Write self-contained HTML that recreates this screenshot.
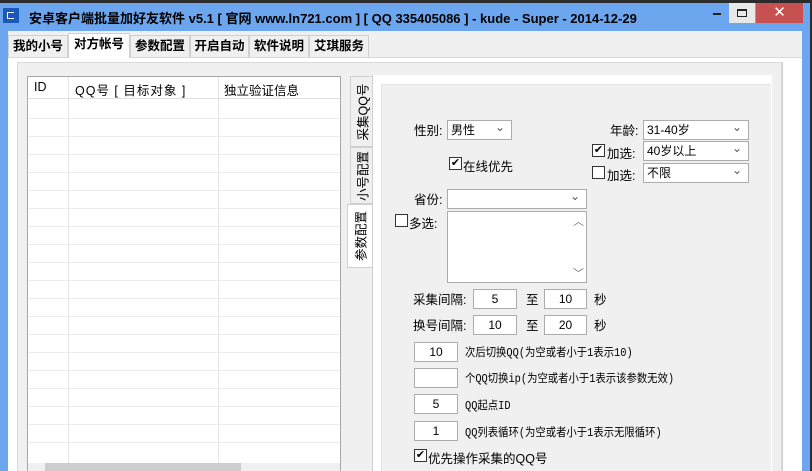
<!DOCTYPE html>
<html><head><meta charset="utf-8"><style>
*{margin:0;padding:0;box-sizing:border-box}
body{width:812px;height:471px;overflow:hidden;background:#6ca6ee;font-family:"Liberation Sans","Noto Sans CJK SC","WenQuanYi Zen Hei",sans-serif;font-size:12px;color:#000;position:relative}
.a{position:absolute}
.tb{left:0;top:0;width:812px;height:3px;background:#2b2b2b}
.tab{position:absolute;top:35px;height:22px;border:1px solid #d0d0d0;border-bottom:none;background:#f0f0f0;font-size:12.5px;line-height:20px;text-align:center;font-weight:bold}
.inp{position:absolute;background:#fff;border:1px solid #acacac;text-align:center;font-size:12px;line-height:18px;height:20px}
.cb{position:absolute;width:13px;height:13px;border:1px solid #333;background:#fff;font-size:11px;line-height:11px;text-align:center}
.lbl{position:absolute;font-size:12.5px;white-space:nowrap;margin-top:-2px}
.sm{font-family:"Liberation Mono","WenQuanYi Zen Hei",monospace;font-size:11.5px;transform:scaleX(.9);transform-origin:left}
.combo{position:absolute;background:#fff;border:1px solid #acacac;height:20px;line-height:18px;padding-left:3px}
.combo:after{content:"⌄";position:absolute;right:6px;top:-3px;color:#555;font-size:12px}
.vt{position:absolute;border:1px solid #d0d0d0;background:#f0f0f0;overflow:hidden}
.vt span{position:absolute;left:50%;top:50%;white-space:nowrap;font-size:12.5px;transform:translate(-50%,-50%) rotate(-90deg)}
.row{position:absolute;left:28px;width:312px;height:1px;background:#ececec}
</style></head><body>
<div class="a tb"></div>
<div class="a" style="left:3px;top:8px;width:16px;height:15px;background:#1c58b8"></div>
<div class="a" style="left:7px;top:12px;width:7px;height:7px;border:1.5px solid #fff;border-right:none"></div>
<div class="a" style="left:29px;top:8px;font-size:13px;font-weight:bold;white-space:nowrap">安卓客户端批量加好友软件 v5.1 [ 官网 www.ln721.com ] [ QQ 335405086 ] - kude - Super - 2014-12-29</div>
<div class="a" style="left:713px;top:13px;width:8px;height:2px;background:#222"></div>
<div class="a" style="left:729px;top:3px;width:26px;height:20px;background:#e8e8e8"></div>
<div class="a" style="left:737px;top:9px;width:10px;height:8px;border:1px solid #222;border-top-width:2px"></div>
<div class="a" style="left:756px;top:3px;width:47px;height:20px;background:#c75050;color:#fff;font-size:15px;line-height:20px;text-align:center">✕</div>
<div class="a" style="left:8px;top:31px;width:794px;height:440px;background:#f0f0f0"></div>
<div class="tab" style="left:8px;width:60px">我的小号</div>
<div class="tab" style="left:68px;width:62px;top:33px;height:25px;background:#fff;z-index:2">对方帐号</div>
<div class="tab" style="left:130px;width:60px">参数配置</div>
<div class="tab" style="left:190px;width:59px">开启自动</div>
<div class="tab" style="left:249px;width:60px">软件说明</div>
<div class="tab" style="left:309px;width:60px">艾琪服务</div>
<div class="a" style="left:8px;top:57px;width:794px;height:414px;background:#fff;border-top:1px solid #d9d9d9"></div>
<div class="a" style="left:17px;top:62px;width:765px;height:409px;background:#f0f0f0;border:1px solid #dadada;border-bottom:none"></div>
<!-- list -->
<div class="a" style="left:27px;top:76px;width:314px;height:395px;background:#fff;border:1px solid #a8a8a8;border-bottom:none"></div>
<div class="a" style="left:34px;top:80px;font-size:12.5px">ID</div>
<div class="a" style="left:75px;top:80px;font-size:12.5px;letter-spacing:1px">QQ号 [ 目标对象 ]</div>
<div class="a" style="left:224px;top:80px;font-size:12.5px">独立验证信息</div>
<div class="a" style="left:68px;top:77px;width:1px;height:386px;background:#e5e5e5"></div>
<div class="a" style="left:218px;top:77px;width:1px;height:386px;background:#e5e5e5"></div>
<div class="row" style="top:98px;background:#e0e0e0"></div>
<div class="row" style="top:118px"></div><div class="row" style="top:136px"></div><div class="row" style="top:154px"></div><div class="row" style="top:172px"></div><div class="row" style="top:190px"></div><div class="row" style="top:208px"></div><div class="row" style="top:226px"></div><div class="row" style="top:244px"></div><div class="row" style="top:262px"></div><div class="row" style="top:280px"></div><div class="row" style="top:298px"></div><div class="row" style="top:316px"></div><div class="row" style="top:334px"></div><div class="row" style="top:352px"></div><div class="row" style="top:370px"></div><div class="row" style="top:388px"></div><div class="row" style="top:406px"></div><div class="row" style="top:424px"></div><div class="row" style="top:442px"></div>
<div class="a" style="left:28px;top:463px;width:312px;height:8px;background:#f0f0f0"></div>
<div class="a" style="left:45px;top:463px;width:196px;height:8px;background:#cdcdcd"></div>
<!-- vertical tabs -->
<div class="vt" style="left:350px;top:76px;width:23px;height:71px"><span>采集QQ号</span></div>
<div class="vt" style="left:350px;top:147px;width:23px;height:57px"><span>小号配置</span></div>
<div class="vt" style="left:347px;top:204px;width:26px;height:64px;background:#fff;z-index:2"><span>参数配置</span></div>
<div class="a" style="left:372px;top:75px;width:400px;height:396px;background:#fff;border-left:1px solid #d0d0d0"></div>
<div class="a" style="left:381px;top:84px;width:390px;height:387px;background:#f0f0f0;border:1px solid #e3e3e3;border-right:none;border-bottom:none"></div>
<!-- form -->
<div class="lbl" style="left:414px;top:122px">性别:</div>
<div class="combo" style="left:447px;top:120px;width:65px">男性</div>
<div class="lbl" style="left:610px;top:122px">年龄:</div>
<div class="combo" style="left:643px;top:120px;width:106px">31-40岁</div>
<div class="cb" style="left:592px;top:144px">✔</div><div class="lbl" style="left:607px;top:145px">加选:</div>
<div class="combo" style="left:643px;top:141px;width:106px">40岁以上</div>
<div class="cb" style="left:592px;top:166px"></div><div class="lbl" style="left:607px;top:167px">加选:</div>
<div class="combo" style="left:643px;top:163px;width:106px">不限</div>
<div class="cb" style="left:449px;top:157px">✔</div><div class="lbl" style="left:463px;top:158px">在线优先</div>
<div class="lbl" style="left:414px;top:191px">省份:</div>
<div class="combo" style="left:447px;top:189px;width:140px"></div>
<div class="cb" style="left:395px;top:214px"></div><div class="lbl" style="left:409px;top:215px">多选:</div>
<div class="a" style="left:447px;top:211px;width:140px;height:72px;background:#fff;border:1px solid #acacac"></div>
<div class="a" style="left:573px;top:213px;color:#777;font-size:11px">︿</div>
<div class="a" style="left:573px;top:265px;color:#777;font-size:11px">﹀</div>
<div class="lbl" style="left:413px;top:291px">采集间隔:</div>
<div class="inp" style="left:473px;top:289px;width:44px">5</div>
<div class="lbl" style="left:526px;top:291px">至</div>
<div class="inp" style="left:544px;top:289px;width:43px">10</div>
<div class="lbl" style="left:594px;top:291px">秒</div>
<div class="lbl" style="left:413px;top:317px">换号间隔:</div>
<div class="inp" style="left:473px;top:315px;width:44px">10</div>
<div class="lbl" style="left:526px;top:317px">至</div>
<div class="inp" style="left:544px;top:315px;width:43px">20</div>
<div class="lbl" style="left:594px;top:317px">秒</div>
<div class="inp" style="left:414px;top:342px;width:44px">10</div>
<div class="lbl sm" style="left:465px;top:346px">次后切换QQ(为空或者小于1表示10)</div>
<div class="inp" style="left:414px;top:368px;width:44px"></div>
<div class="lbl sm" style="left:465px;top:372px">个QQ切换ip(为空或者小于1表示该参数无效)</div>
<div class="inp" style="left:414px;top:394px;width:44px">5</div>
<div class="lbl sm" style="left:465px;top:399px">QQ起点ID</div>
<div class="inp" style="left:414px;top:421px;width:44px">1</div>
<div class="lbl sm" style="left:465px;top:426px">QQ列表循环(为空或者小于1表示无限循环)</div>
<div class="cb" style="left:414px;top:449px">✔</div><div class="lbl" style="left:428px;top:450px">优先操作采集的QQ号</div>
<div class="a" style="left:782px;top:62px;width:1px;height:409px;background:#d0d0d0"></div>
<div class="a" style="left:802px;top:31px;width:8px;height:440px;background:#6ca6ee"></div>
<div class="a" style="left:810px;top:0;width:2px;height:471px;background:#2b2b2b"></div>
</body></html>
